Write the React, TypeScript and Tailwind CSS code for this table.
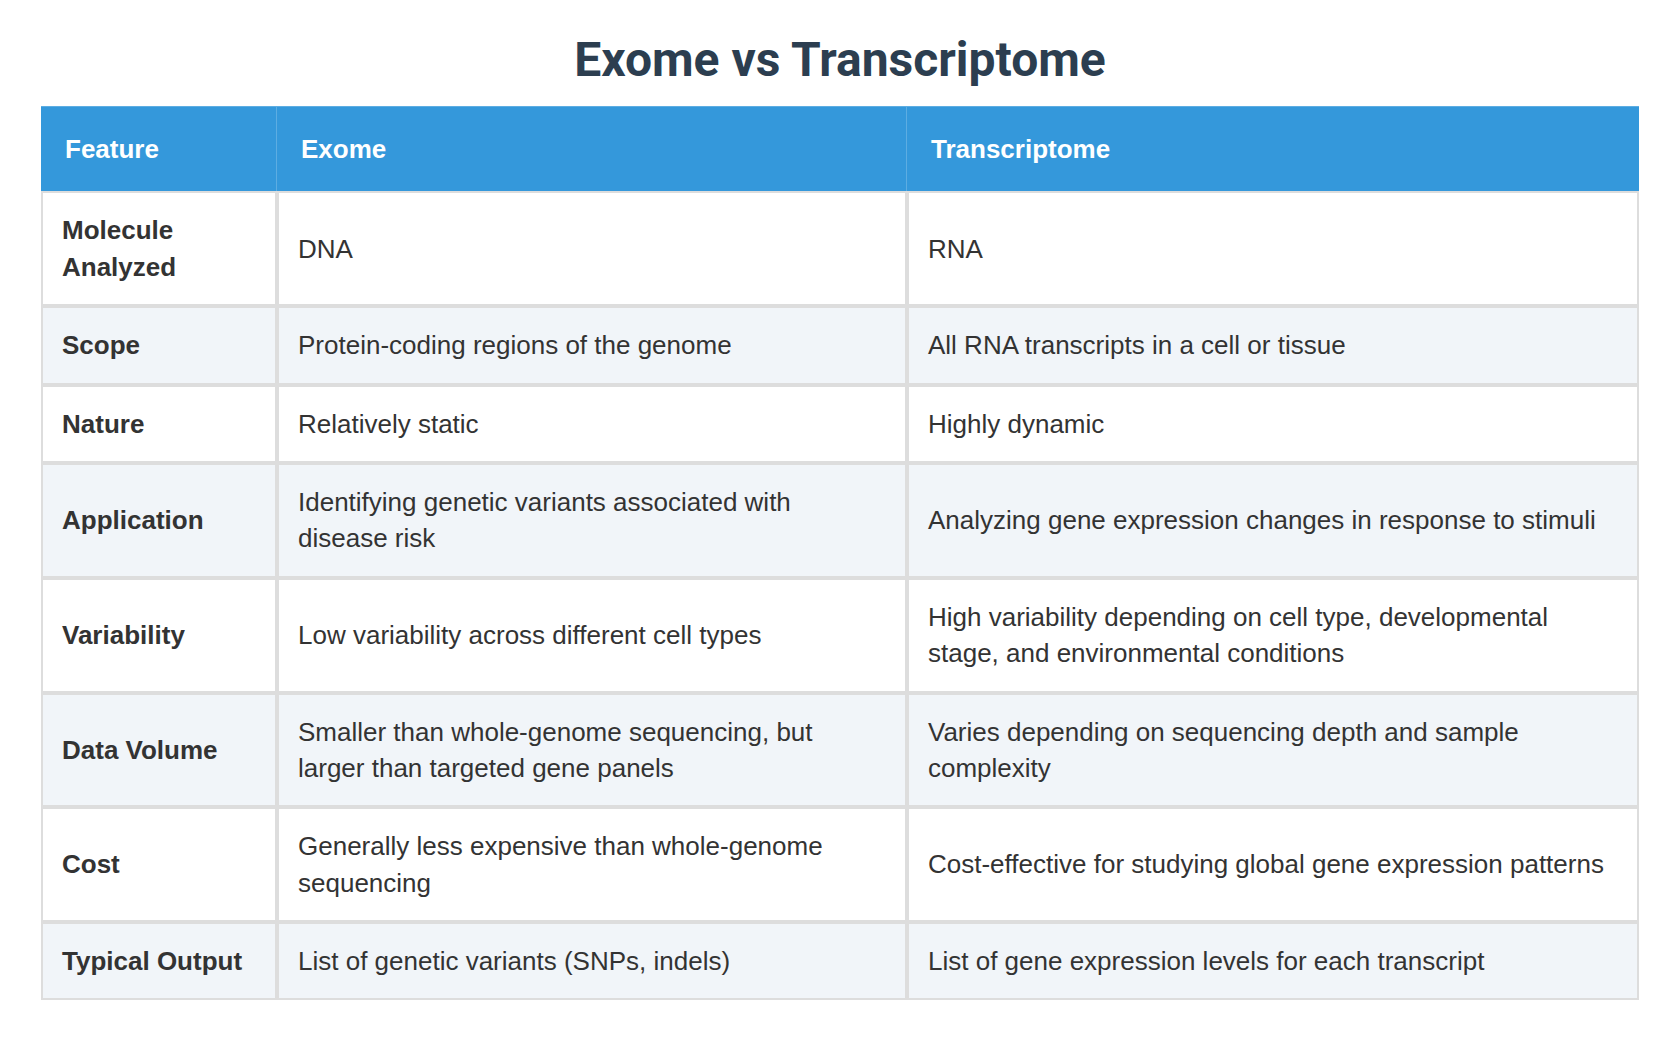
const rows: [string, string, string][] = [
  ["Molecule Analyzed", "DNA", "RNA"],
  ["Scope", "Protein-coding regions of the genome", "All RNA transcripts in a cell or tissue"],
  ["Nature", "Relatively static", "Highly dynamic"],
  [
    "Application",
    "Identifying genetic variants associated with disease risk",
    "Analyzing gene expression changes in response to stimuli",
  ],
  [
    "Variability",
    "Low variability across different cell types",
    "High variability depending on cell type, developmental stage, and environmental conditions",
  ],
  [
    "Data Volume",
    "Smaller than whole-genome sequencing, but larger than targeted gene panels",
    "Varies depending on sequencing depth and sample complexity",
  ],
  [
    "Cost",
    "Generally less expensive than whole-genome sequencing",
    "Cost-effective for studying global gene expression patterns",
  ],
  [
    "Typical Output",
    "List of genetic variants (SNPs, indels)",
    "List of gene expression levels for each transcript",
  ],
];

const th =
  "px-6 py-6 text-left font-bold text-white bg-[#3498db] border-t border-r border-[#5dade2] last:border-r-0";
const td = "pl-[19px] pr-[24px] py-[19px] align-middle border-2 border-[#dddddd]";

export default function App() {
  return (
    <div className="min-h-screen bg-white px-[41px] pt-[32px] font-[family-name:'Liberation_Sans',Arial,sans-serif] text-[#333333]">
      <h1 className="mb-[18px] text-center font-[family-name:Roboto,sans-serif] text-[48px] leading-[56px] font-bold text-[#2c3e50]">
        Exome vs Transcriptome
      </h1>
      <table className="w-full table-fixed border-separate border-spacing-0 text-[26px] leading-[1.4]">
        <thead>
          <tr>
            <th className={`${th} w-[236px]`}>Feature</th>
            <th className={`${th} w-[630px]`}>Exome</th>
            <th className={th}>Transcriptome</th>
          </tr>
        </thead>
        <tbody>
          {rows.map(([feature, exome, transcriptome], i) => (
            <tr key={feature} className={i % 2 === 1 ? "bg-[#f1f5f9]" : "bg-white"}>
              <td className={`${td} font-bold`}>{feature}</td>
              <td className={td}>{exome}</td>
              <td className={td}>{transcriptome}</td>
            </tr>
          ))}
        </tbody>
      </table>
    </div>
  );
}
